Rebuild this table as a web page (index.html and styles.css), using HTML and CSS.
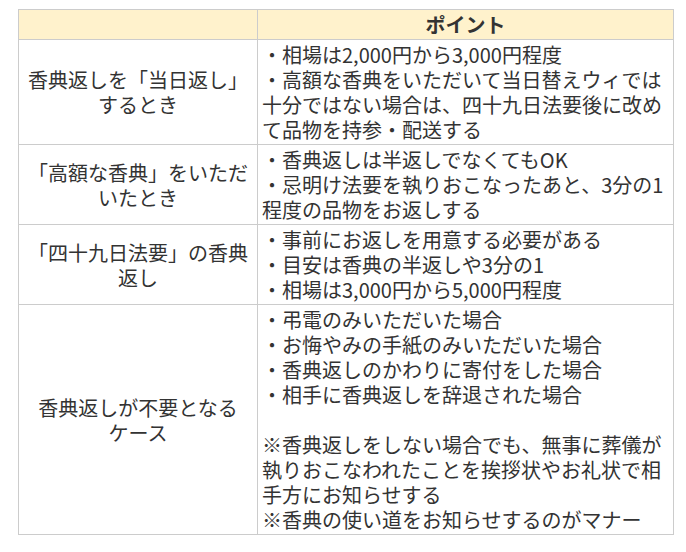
FILE: index.html
```html
<!DOCTYPE html>
<html lang="ja">
<head>
<meta charset="utf-8">
<link rel="stylesheet" href="styles.css">
</head>
<body>
<table class="tbl">
  <colgroup><col class="c1"><col class="c2"></colgroup>
  <thead>
    <tr><th></th><th>ポイント</th></tr>
  </thead>
  <tbody>
    <tr>
      <td class="lbl">香典返しを「当日返し」<br>するとき</td>
      <td class="pt">・相場は2,000円から3,000円程度<br>・高額な香典をいただいて当日替えウィでは<br>十分ではない場合は、四十九日法要後に改め<br>て品物を持参・配送する</td>
    </tr>
    <tr>
      <td class="lbl">「高額な香典」をいただ<br>いたとき</td>
      <td class="pt">・香典返しは半返しでなくてもOK<br>・忌明け法要を執りおこなったあと、3分の1<br>程度の品物をお返しする</td>
    </tr>
    <tr>
      <td class="lbl">「四十九日法要」の香典<br>返し</td>
      <td class="pt">・事前にお返しを用意する必要がある<br>・目安は香典の半返しや3分の1<br>・相場は3,000円から5,000円程度</td>
    </tr>
    <tr>
      <td class="lbl">香典返しが不要となる<br>ケース</td>
      <td class="pt">・弔電のみいただいた場合<br>・お悔やみの手紙のみいただいた場合<br>・香典返しのかわりに寄付をした場合<br>・相手に香典返しを辞退された場合<br><br>※香典返しをしない場合でも、無事に葬儀が<br>執りおこなわれたことを挨拶状やお礼状で相<br>手方にお知らせする<br>※香典の使い道をお知らせするのがマナー</td>
    </tr>
  </tbody>
</table>
</body>
</html>
```
FILE: styles.css
```css
html, body {
  margin: 0;
  padding: 0;
  background: #ffffff;
}
body {
  font-family: "Noto Sans CJK JP", "Noto Sans", sans-serif;
  font-size: 20px;
  line-height: 25px;
  color: #333333;
}
.tbl {
  border-collapse: collapse;
  margin: 9px 0 0 18px;
  width: 655px;
  table-layout: fixed;
}
.c1 { width: 239px; }
.c2 { width: 416px; }
.tbl th,
.tbl td {
  border: 1px solid #cccccc;
  padding: 2px 4px;
  white-space: nowrap;
  overflow: hidden;
}
.tbl th {
  background: #fff2cc;
  font-weight: bold;
  text-align: center;
  height: 24px;
}
.lbl {
  text-align: center;
  vertical-align: middle;
}
.pt {
  text-align: left;
  vertical-align: top;
}
```
